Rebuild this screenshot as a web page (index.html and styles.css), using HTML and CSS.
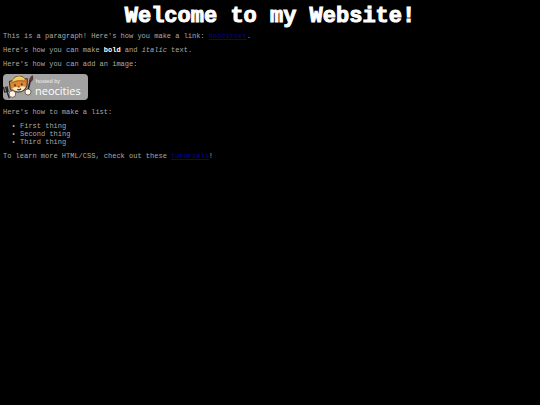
FILE: index.html
```html
<!DOCTYPE html>
<html lang="en">
<head>
<meta charset="UTF-8">
<meta name="viewport" content="width=device-width, initial-scale=1">
<title>My Website</title>
<link rel="stylesheet" href="styles.css">
</head>
<body>
<h1>Welcome to my Website!</h1>
<p>This is a paragraph! Here's how you make a link: <a href="https://neocities.org">Neocities</a>.</p>
<p>Here's how you can make <strong>bold</strong> and <em>italic</em> text.</p>
<p>Here's how you can add an image:</p>
<svg class="badge" viewBox="0 0 255 78" role="img" aria-label="hosted by neocities">
  <rect width="255" height="78" rx="12" fill="#a3a3a3"/>
  <!-- fork -->
  <path d="M1 39 L5 54 L15 52 L12 37 M7 38 L19 73" fill="none" stroke="#252525" stroke-width="4"/>
  <!-- brush -->
  <path d="M82 19 L74 52" stroke="#28211d" stroke-width="5"/>
  <path d="M80 21 C79 13 85 7 88 5 C91 12 89 18 85 22 Z" fill="#8e2925" stroke="#30201c" stroke-width="2"/>
  <!-- cat -->
  <path d="M22 47 L19 22 L29 20 Q34 7 48 7 Q58 4 65 15 L73 14 L72 35 Q69 49 55 53 Q35 57 22 47 Z" fill="#dc8734" stroke="#38271c" stroke-width="3"/>
  <path d="M26 24 Q34 7 49 7 Q61 7 66 18 Q45 15 26 24 Z" fill="#f2cf5d"/>
  <path d="M25 27 Q45 16 68 22" fill="none" stroke="#ad6526" stroke-width="3"/>
  <path d="M28 43 Q37 37 46 40 Q58 34 68 39 Q62 51 49 52 Q35 53 28 43 Z" fill="#f7e9ce"/>
  <path d="M35 31 L37 37 M56 28 L57 34 M43 46 Q48 50 54 44" fill="none" stroke="#3b281d" stroke-width="4"/>
  <path d="M45 39 H50" stroke="#7b3423" stroke-width="3"/>
  <!-- paws -->
  <circle cx="28" cy="60" r="10" fill="#fff7e8" stroke="#423328" stroke-width="2"/>
  <circle cx="75" cy="54" r="9" fill="#fff7e8" stroke="#423328" stroke-width="2"/>
  <text class="badge-small" x="98" y="28">hosted by</text>
  <text class="badge-name" x="96" y="62">neocities</text>
</svg>
<p>Here's how to make a list:</p>
<ul>
  <li>First thing</li>
  <li>Second thing</li>
  <li>Third thing</li>
</ul>
<p>To learn more HTML/CSS, check out these <a href="https://neocities.org/tutorials">tutorials</a>!</p>
</body>
</html>
```
FILE: styles.css
```css
body {
  margin: 0;
  padding: 5px 3px;
  background: #000;
  color: #aaa;
  font: 7px/8px "Liberation Mono", monospace;
}

h1 {
  margin: 0 0 4px;
  color: #fff;
  font-size: 22px;
  line-height: 23px;
  text-align: center;
  -webkit-text-stroke: 1px #fff;
}

p {
  margin: 0 0 6px;
}

a {
  color: #0000a8;
}

strong {
  color: #fff;
}

.badge {
  display: block;
  width: 85px;
  margin-bottom: 8px;
}

.badge-small {
  fill: #f0f0f0;
  font: 17px "Liberation Sans", sans-serif;
}

.badge-name {
  fill: #fff;
  font: 33px "Open Sans", sans-serif;
}

ul {
  margin: 0 0 6px;
  padding-left: 17px;
  list-style-type: "• ";
}
```
